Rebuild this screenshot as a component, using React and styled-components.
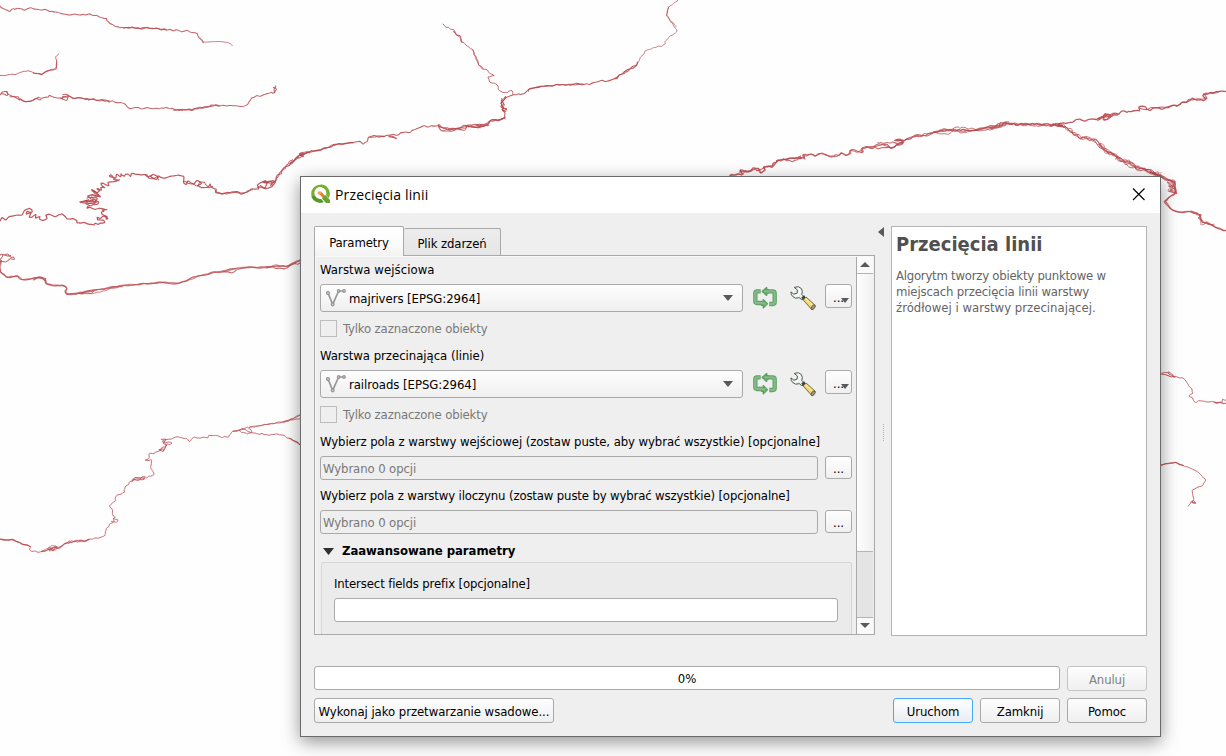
import React from "react";
import styled, { createGlobalStyle, css } from "styled-components";

const GlobalStyle = createGlobalStyle`
  * { box-sizing: border-box; }
  body { margin: 0; background: #fefefe; overflow: hidden; }
`;

const UI_FONT = '"DejaVu Sans Condensed", "DejaVu Sans", sans-serif';

const Desktop = styled.main`
  position: relative;
  width: 1226px;
  height: 756px;
  overflow: hidden;
  background: #fefefe;
  font: 13px/16px ${UI_FONT};
  letter-spacing: -0.1px;
  color: #000;
`;

const MapCanvas = styled.svg`
  display: block;
  width: 1226px;
  height: 756px;
`;

const Dialog = styled.section`
  position: absolute;
  left: 300px;
  top: 176px;
  width: 861px;
  height: 561px;
  border: 1px solid #6a6a6a;
  background: #efefef;
  box-shadow: 0 5px 17px rgba(0, 0, 0, 0.42);
  display: flex;
  flex-direction: column;
`;

const TitleBar = styled.header`
  height: 36px;
  flex: none;
  display: flex;
  align-items: center;
  padding: 0 15px 2px 9px;
  background: #fff;
`;

const WindowTitle = styled.h1`
  flex: 1;
  margin: 0 0 0 5px;
  padding-top: 1px;
  font: 400 14px/20px "Open Sans", "Noto Sans", sans-serif;
  letter-spacing: 0.15px;
`;

const Body = styled.div`
  display: flex;
  padding: 13px 13px 0;
  height: 423px;
`;

const FormColumn = styled.div`
  width: 561px;
  display: flex;
  flex-direction: column;
`;

const Tabs = styled.div`
  display: flex;
  align-items: flex-end;
  height: 29px;
`;

const Tab = styled.div`
  border: 1px solid #a9a9a9;
  border-radius: 2px 2px 0 0;
  text-align: center;
  ${(p) =>
    p.$active
      ? css`
          width: 90px;
          height: 30px;
          margin-bottom: -1px;
          line-height: 32px;
          border-bottom: 0;
          background: linear-gradient(#fff, #fbfbfb 60%, #f3f3f3);
          z-index: 1;
        `
      : css`
          width: 97px;
          height: 27px;
          margin-bottom: 0;
          border-left: 0;
          border-bottom: 0;
          line-height: 30px;
          background: linear-gradient(#ececec, #e6e6e6);
        `}
`;

const Panel = styled.div`
  display: flex;
  width: 561px;
  height: 380px;
  border: 1px solid #a9a9a9;
  padding: 1px 1px 0 1px;
  background: #efefef;
  box-shadow: inset 1px 1px 0 #f8f8f8;
  overflow: hidden;
`;

const Form = styled.div`
  width: 540px;
  padding: 5px 4px 0;
  overflow: hidden;
`;

const Label = styled.div`
  height: 16px;
  white-space: nowrap;
  letter-spacing: ${(p) => p.$ls ?? -0.1}px;
`;

const Txt = styled.span`
  white-space: nowrap;
  letter-spacing: ${(p) => p.$ls ?? -0.1}px;
`;

const Row = styled.div`
  display: flex;
  align-items: flex-start;
  margin-top: ${(p) => p.$top || 0}px;
`;

const Combo = styled.div`
  width: 423px;
  height: 28px;
  display: flex;
  align-items: center;
  padding: 0 9px 0 5px;
  border: 1px solid #a9a9a9;
  border-radius: 3px;
  background: linear-gradient(#fefefe, #efefef);
  & > span { flex: 1; padding: 1px 0 0 3px; }
`;

const Field = styled.div`
  width: 498px;
  height: 24px;
  padding: 0 2px;
  line-height: 24px;
  border: 1px solid #a9a9a9;
  border-radius: 3px;
  color: #787878;
`;

const PrefixInput = styled(Field)`
  width: 504px;
  background: #fff;
`;

const IconSlot = styled.div`
  width: 26px;
  height: 28px;
  margin-left: ${(p) => p.$gap}px;
  svg { display: block; }
`;

const MoreButton = styled.div`
  position: relative;
  width: 27px;
  height: ${(p) => (p.$menu ? 24 : 23)}px;
  margin-left: ${(p) => (p.$menu ? 9 : 7)}px;
  border: 1px solid #a9a9a9;
  border-radius: 3px;
  text-align: center;
  line-height: ${(p) => (p.$menu ? 25 : 24)}px;
  background: linear-gradient(#fefefe, #f0f0f0);
  svg { position: absolute; right: 2px; bottom: 4px; }
`;

const CheckRow = styled.div`
  display: flex;
  align-items: center;
  height: 17px;
  margin-top: 8px;
  line-height: 18px;
  color: #787878;
`;

const CheckBox = styled.span`
  width: 17px;
  height: 17px;
  margin-right: 6px;
  border: 1px solid #bdbdbd;
`;

const GroupHeading = styled.div`
  display: flex;
  align-items: center;
  gap: 8px;
  height: 16px;
  margin-top: 9px;
  padding-left: 3px;
  font-weight: 700;
`;

const GroupBox = styled.div`
  width: 531px;
  height: 100px;
  margin: 3px 0 0 1px;
  padding: 13px 12px 0;
  border: 1px solid #d6d6d6;
  border-radius: 2px;
  background: #ebebeb;
`;

const ScrollBar = styled.div`
  width: 17px;
  display: flex;
  flex-direction: column;
  border-left: 1px solid #a9a9a9;
  background: #e4e4e4;
`;

const ScrollButton = styled.div`
  height: 16px;
  display: flex;
  align-items: center;
  justify-content: center;
  padding: 0 1px 2px 0;
  background: #fafafa;
`;

const Thumb = styled.div`
  height: 279px;
  border: 1px solid #b4b4b4;
  border-width: 1px 0;
  background: linear-gradient(90deg, #fefefe, #f0f0f0);
`;

const Groove = styled.div`
  flex: 1;
  border-bottom: 1px solid #b4b4b4;
`;

const Splitter = styled.div`
  width: 16px;
  display: flex;
  flex-direction: column;
  align-items: flex-start;
  svg { display: block; }
`;

const Grip = styled.div`
  height: 17px;
  margin: 169px 0 0 8px;
  border-left: 1px dotted #b2b2b2;
`;

const HelpPane = styled.aside`
  width: 256px;
  height: 410px;
  padding: 3px 4px;
  border: 1px solid #b4b4b4;
  background: #fff;
  color: #646464;
`;

const HelpTitle = styled.h2`
  margin: 0 0 10px;
  font: 700 20px/28px ${UI_FONT};
  letter-spacing: 0;
  color: #505050;
`;

const HelpText = styled.p`
  margin: 0;
  line-height: 16px;
`;

const Footer = styled.footer`
  padding: 30px 13px 0;
  display: grid;
  gap: 7px;
`;

const FooterRow = styled.div`
  display: flex;
  gap: 7px;
`;

const ProgressBar = styled.div`
  width: 746px;
  height: 24px;
  border: 1px solid #a9a9a9;
  border-radius: 3px;
  background: #fff;
  text-align: center;
  line-height: 24px;
`;

const Button = styled.div`
  width: ${(p) => p.$w || 80}px;
  height: 25px;
  border: 1px solid ${(p) => (p.$primary ? "#45a9f5" : p.$disabled ? "#c4c4c4" : "#a9a9a9")};
  border-radius: 3px;
  text-align: center;
  line-height: 26px;
  color: ${(p) => (p.$disabled ? "#808080" : "#000")};
  background: ${(p) =>
    p.$primary ? "linear-gradient(#fefefe, #e8edf1)" : "linear-gradient(#fefefe, #efefef)"};
`;

const BatchButton = styled(Button)`
  letter-spacing: -0.05px;
`;

const Spacer = styled.div`
  flex: 1;
`;

const QgisLogo = () => (
  <svg width="20" height="20" viewBox="0 0 60 60">
    <path d="M30 2a27 27 0 1 0 11 52l-8-9a18 18 0 1 1 15-12l8 9A27 27 0 0 0 30 2z" fill="#78ae2e" />
    <path d="M4 36a27 27 0 0 0 37 18l-8-9a18 18 0 0 1-18-9z" fill="#589632" />
    <path d="M37 34h10l13 14v9H48L37 45z" fill="#69a232" />
    <path d="M23 23h11l8 9-2 3 2 3h-7z" fill="#ee7913" />
    <path d="M23 23h11l2 3-9 7-4-4z" fill="#f2a064" />
  </svg>
);

const CloseIcon = () => (
  <svg width="13" height="13" viewBox="0 0 13 13">
    <path d="M1 .5l11.5 11.5M12.5 .5L1 12" stroke="#000" strokeWidth="1.15" />
  </svg>
);

const VectorLineIcon = () => (
  <svg width="20" height="18" viewBox="0 0 60 54" fill="none" stroke="#969696">
    <path d="M6 12L20 46L38 6H54" strokeWidth="5" />
    <g fill="#c8c8c8" strokeWidth="3.4">
      <circle cx="6" cy="12" r="4.5" />
      <circle cx="20" cy="46" r="4.5" />
      <circle cx="38" cy="6" r="4" />
      <circle cx="54" cy="6" r="4" />
    </g>
  </svg>
);

const IterateIcon = () => (
  <svg width="24" height="23" viewBox="0 0 72 69" fill="none">
    <g stroke="#5d9f63" strokeWidth="13" strokeLinejoin="round">
      <path d="M23 16H12Q7 16 7 21V46Q7 51 12 51H32" />
      <path d="M49 54H60Q65 54 65 49V22Q65 16 59 16H42" />
    </g>
    <path d="M28 16L41 5V11H46V21H41V28zM43 53L31 41V47H26V58H31V65z" fill="#84b988" stroke="#5d9f63" strokeWidth="4.5" strokeLinejoin="round" />
    <g stroke="#84b988" strokeWidth="7">
      <path d="M22 16H12Q7 16 7 21V46Q7 51 12 51H34" />
      <path d="M50 54H60Q65 54 65 49V22Q65 16 59 16H40" />
    </g>
  </svg>
);

const WrenchIcon = () => (
  <svg width="27" height="27" viewBox="0 0 81 81">
    <path
      d="M13 6Q27 0 35 9Q41 18 37 28L45 36L38 45L29 38Q16 43 8 34Q2 28 3 20L12 27L22 24L23 14z"
      fill="#e9efe9"
      stroke="#4d534d"
      strokeWidth="3"
      strokeLinejoin="round"
    />
    <path d="M24 8Q32 10 31 19Q30 28 17 33" fill="none" stroke="#fff" strokeWidth="4" />
    <path d="M35 37L44 30L49 38L42 46z" fill="#3e403c" />
    <path d="M41 45L50 36L79 62L69 76z" fill="#f0d878" stroke="#6d6442" strokeWidth="3" strokeLinejoin="round" />
    <path d="M49 42L75 65" stroke="#f8e8a4" strokeWidth="4" />
    <ellipse cx="72" cy="68" rx="5" ry="8" transform="rotate(38 72 68)" fill="#a09a80" stroke="#54503f" strokeWidth="2.5" />
  </svg>
);

const Arrow = ({ dir = "down", w = 10, h = 6, fill = "#595959" }) => {
  const d = {
    down: `M0 0H${w}L${w / 2} ${h}z`,
    up: `M0 ${h}H${w}L${w / 2} 0z`,
    left: `M${w} 0V${h}L0 ${h / 2}z`,
  }[dir];
  return (
    <svg width={w} height={h} viewBox={`0 0 ${w} ${h}`}>
      <path d={d} fill={fill} />
    </svg>
  );
};

/* Seeded noise keeps every strand of a river identical between renders. */
const noise = (seed) => {
  let s = seed * 7919 + 17;
  return () => {
    s = (s * 16807) % 2147483647;
    return s / 2147483647 - 0.5;
  };
};

/* Subdivides a course, displaces each step and rounds the bends into meanders. */
const strand = (pts, amp, step, seed) => {
  const r = noise(seed);
  const n = pts.trim().split(/\s+/).map((p) => p.split(",").map(Number));
  const out = [n[0]];
  for (let i = 1; i < n.length; i++) {
    const [x0, y0] = n[i - 1];
    const [x1, y1] = n[i];
    const k = Math.max(1, Math.round(Math.hypot(x1 - x0, y1 - y0) / step));
    for (let j = 1; j <= k; j++) {
      const t = j / k;
      out.push([x0 + (x1 - x0) * t + r() * amp, y0 + (y1 - y0) * t + r() * amp]);
    }
  }
  let d = `M${out[0][0]} ${out[0][1]}`;
  for (let i = 1; i < out.length - 1; i++) {
    const [x, y] = out[i];
    const [a, b] = out[i + 1];
    d += `Q${x.toFixed(1)} ${y.toFixed(1)} ${((x + a) / 2).toFixed(1)} ${((y + b) / 2).toFixed(1)}`;
  }
  const [lx, ly] = out[out.length - 1];
  return `${d}L${lx.toFixed(1)} ${ly.toFixed(1)}`;
};

const River = ({ pts, amp = 5, step = 7, n = 1, w = 2.6, o = 0.85, seed = 1 }) =>
  Array.from({ length: n }, (_, i) => (
    <path key={i} d={strand(pts, amp * 1.35, step, seed + i * 13)} strokeWidth={w + 0.5} opacity={o} />
  ));

/* Each tile holds courses surveyed at three units per pixel. */
const TILES = [
  {
    x: 0, y: 0,
    rivers: [
      { pts: "0,18 12,24 28,34 40,27 60,27 75,29 90,22 105,26 145,30 155,36 190,40 235,46 270,42 290,48 320,55 325,65 345,80 400,84 450,83 500,89 560,93 590,102 608,126", amp: 5, w: 2.6 },
      { pts: "608,126 640,125 680,126 698,136", amp: 2, w: 2 },
      { pts: "370,83 440,85 500,89", amp: 3 },
      { pts: "0,226 45,223 65,214 90,212 105,220 125,222 140,213 168,206 170,190 168,170 178,160", amp: 3, w: 2.4 },
      { pts: "100,218 125,226 145,212 168,206 170,184", amp: 4 },
      { pts: "0,285 10,277 24,276 22,288 2,280", amp: 6 },
      { pts: "20,276 34,291 50,295 85,305 110,295 150,288 185,299 200,286 215,293 260,298 300,301 350,306 380,316 390,325 450,325 510,326 555,331 600,325 640,316 690,317 728,320 748,308 752,294 800,282 825,275 822,265 830,256", amp: 5, w: 2.6 },
      { pts: "30,290 60,296 85,303 120,294", amp: 8 },
      { pts: "188,284 205,287 198,300 182,297 190,290 240,294 280,300 330,303", amp: 6 },
      { pts: "520,330 560,331 600,324 660,315", amp: 5 },
      { pts: "820,262 829,268 822,277", amp: 3 },
      { pts: "0,663 6,652 18,660 24,650 45,647 65,645 72,632 86,626 98,630 95,638 80,633 78,644 95,636 86,652 92,654 108,642 106,656 120,650 118,657 130,661 143,656 137,646 148,643 165,650 185,642 196,648 200,657 222,656 231,661 229,669 250,668 270,672 282,675 285,668 296,675 300,669 315,668 310,661 293,660 290,651 303,655 308,648 326,655 318,659 322,650 306,643 303,637 312,634 306,630 322,629 300,625 284,628 272,621 260,625 262,619 295,612 297,605 270,610 239,607 268,598 255,604 290,603 292,594 268,592 262,588 278,584 303,590 284,580 275,568 290,578 300,574 290,566 305,570 302,561 316,562 304,556 303,549 316,552 326,558 324,548 338,545 360,541 340,540 345,535 328,528 333,524 346,536 350,522 362,531 362,521 374,530 376,522 385,522 391,530 393,521 420,524 440,524 446,531 460,523 450,531 472,538 474,526 486,534 498,535 510,529 540,525 553,530 550,548 560,555 563,543 583,553 590,541 606,550 592,556 600,562 625,563 630,550 634,561 650,568 646,578 665,580 714,574 722,583 745,575 752,567 777,566 772,554 796,542 800,548 819,541 826,547 816,560 796,566 781,557", amp: 2, step: 6, w: 3.1, o: 0.92 },
      { pts: "242,608 262,600 290,600 262,606 258,613 290,609 270,592 258,598", amp: 6 },
      { pts: "276,572 298,584 292,590 270,586", amp: 6 },
      { pts: "436,525 450,535 474,530 460,524 480,535", amp: 8 },
      { pts: "552,544 590,556 606,546 634,562", amp: 8 },
      { pts: "772,562 800,562 800,550 790,543 818,546 826,541 834,526 844,520 850,508 866,494 880,482 895,468 908,462 910,468 898,463 916,459 930,455", amp: 5, w: 3.4 },
      { pts: "646,572 665,582 714,576 730,581 760,569", amp: 4 },
      { pts: "790,545 820,550 812,556 826,544 850,508 880,480", amp: 6 },
      { pts: "0,765 18,762 28,768 46,774 44,780 30,774 26,783 3,784 3,776 10,766 34,770", amp: 5 },
      { pts: "4,782 -2,800 3,820 20,832 52,827 66,840 105,836 125,832 138,844 138,852 160,857 190,856 200,862 195,876 204,884 270,874 350,859 430,852 485,847 535,852 580,833 640,818 700,808 740,801 790,803 830,796 860,798 903,781", amp: 5, step: 12, n: 3, w: 2.8, o: 0.62 },
      { pts: "200,884 240,880 280,880 330,866 365,858", amp: 4, w: 2 },
      { pts: "235,878 260,872 285,874 272,881 240,881", amp: 3, w: 2 },
      { pts: "100,840 120,831 136,834 138,845", amp: 3 },
      { pts: "670,815 690,820 710,812", amp: 5 },
      { pts: "800,804 850,804 852,812 866,800 903,786", amp: 6 },
    ],
  },
  {
    x: 290, y: 0,
    rivers: [
      { pts: "459,72 470,80 490,91 500,104 512,115 516,127 530,134 548,148 553,165 565,190 578,208 595,213 612,226 594,233 600,245 620,255 628,272 640,277 655,276 657,271 670,274 667,285", amp: 5, w: 2.4 },
      { pts: "490,94 500,104 512,110 516,126", amp: 6 },
      { pts: "548,148 555,168 565,190 582,211", amp: 6, w: 2 },
      { pts: "1164,0 1148,12 1135,20 1130,45 1140,62 1152,75 1160,95 1140,110 1124,125 1127,135 1085,144 1065,155 1050,175 1040,195", amp: 4, w: 2.1, o: 0.8 },
      { pts: "1040,195 1020,205 995,222 970,237 950,244 925,244 895,252 850,252 800,255 760,258 725,266 712,275 700,284 680,283 665,286 650,290 637,302 632,315 640,330 645,340 645,352 630,358 600,364 590,374 570,378 520,383 490,390 465,386 445,380 405,379 380,385 355,396 340,397 320,405 290,408 240,410 232,414 231,425 220,430 200,424 180,430 150,430 120,440 85,450 50,457 35,463 20,472 0,493", amp: 5, w: 2.7, o: 0.9 },
      { pts: "1135,20 1134,35 1130,50 1146,66 1156,84", amp: 6, w: 2 },
      { pts: "1042,186 1036,200 1000,220 972,238", amp: 5, w: 3 },
      { pts: "880,252 850,255 800,254 730,262 714,272", amp: 4 },
      { pts: "646,290 635,308 634,322 650,325 645,335 636,330 642,312 634,300", amp: 7, n: 2, w: 2.5 },
      { pts: "645,354 620,362 600,362 588,374 560,376", amp: 6, n: 2 },
      { pts: "596,376 565,382 560,376 530,376 525,388 500,388 480,392 455,390 442,376 470,384 510,386 520,378 575,382", amp: 6, n: 2, w: 2.1 },
      { pts: "295,408 322,416 300,406", amp: 3 },
      { pts: "240,412 285,409", amp: 3 },
      { pts: "190,428 140,433 85,450 45,458 28,462 40,468 20,474 0,493", amp: 5, n: 2, w: 2 },
    ],
  },
  {
    x: 0, y: 390,
    rivers: [
      { pts: "0,447 40,450 60,461 90,470 88,480 125,487 140,478 165,470 180,473 200,459 240,455 265,450 305,438 314,436 318,420 330,404 340,395 345,380 335,365 330,346 345,332 345,322 355,312 374,305 372,292 395,274 410,265 440,262 462,255 461,240 453,232 457,210 437,211 450,203 447,195 480,183 490,172 500,175 498,165 515,160 487,157 485,150 515,148 525,143 545,142 560,145 572,156 575,145 600,140 615,143 640,134 660,140 685,140 700,126 720,117 735,112 755,117 755,126 740,130 722,125 720,117", amp: 6, w: 2.3 },
      { pts: "0,447 40,450 60,461 90,470", amp: 3, w: 3.2 },
      { pts: "125,484 150,470 170,471 166,479 144,480 180,473 205,458 230,449 255,455 270,448", amp: 7, n: 2, w: 2 },
      { pts: "396,274 405,264 435,262 428,268 400,270", amp: 4 },
      { pts: "484,148 500,150 490,158 500,162 492,182 478,178 494,176", amp: 6 },
      { pts: "340,385 355,390 350,398 334,394", amp: 3, w: 2 },
      { pts: "748,112 780,108 820,99 850,96 880,86 903,74", amp: 5, n: 2, w: 2 },
      { pts: "852,94 880,90 903,85", amp: 3, w: 2.2 },
      { pts: "700,124 730,120 760,126 800,135 840,134 870,146 903,166", amp: 5, w: 2.4 },
      { pts: "868,145 903,166", amp: 4 },
    ],
  },
  {
    x: 730, y: 80,
    rivers: [
      { pts: "0,286 40,284 28,272 60,275 70,266 85,267 90,278 105,272 100,260 125,260 130,248 150,240 180,235 225,236 220,225 255,226 275,218 300,228 325,226 335,218 350,228 362,220 358,210 380,214 400,215 395,203 420,200 440,195 475,196 485,207 500,195 520,188 512,178 495,180 525,182 550,170 585,168 610,156 640,150 680,150 720,150 760,146 800,135 820,130 860,133 920,132 970,136 1000,140", amp: 6, w: 2.8, n: 2, o: 0.8 },
      { pts: "28,276 90,268 125,258 150,240 215,232", amp: 8 },
      { pts: "160,236 185,244 215,236 205,228", amp: 5 },
      { pts: "395,207 440,203 485,205 520,187 440,190", amp: 6 },
      { pts: "525,180 570,164 610,156 650,162 680,142 760,152 800,146 810,127 830,128", amp: 6, w: 2.3 },
      { pts: "610,156 660,148 700,156 770,144 810,138 840,126", amp: 10, n: 2, w: 2, step: 11 },
      { pts: "780,145 830,132 900,133 960,140 975,128 1000,137 960,134", amp: 8, n: 2, w: 2.2 },
      { pts: "985,132 1020,127 1050,117 1060,124 1085,118 1110,120 1120,108 1140,110 1165,102 1170,93 1190,95 1230,93 1228,80 1245,82 1255,92 1275,83 1300,86 1320,78 1348,76 1360,67 1380,62 1385,53 1400,59 1430,60 1418,43 1450,38 1470,33 1490,35", amp: 4, w: 3.4, o: 0.9 },
      { pts: "1102,116 1130,104 1140,110 1120,120 1125,103 1165,102", amp: 7, n: 2 },
      { pts: "1228,84 1244,90 1262,84 1300,83 1348,75", amp: 5 },
      { pts: "1350,73 1380,60 1430,57 1420,42 1460,38 1470,32", amp: 5 },
      { pts: "985,132 1020,150 1050,172 1100,182 1120,205 1150,225 1190,250 1240,268 1292,288", amp: 12, n: 4, w: 2.2, step: 10 },
      { pts: "1110,190 1130,215 1155,228 1205,252 1235,272 1290,286", amp: 18, n: 3, w: 1.5, step: 12 },
    ],
  },
  {
    x: 1150, y: 150,
    rivers: [
      { pts: "0,66 31,78 52,88 75,98 76,130 55,147 43,155 60,175 82,187 125,185 148,193 155,218 180,222 205,234 228,243", amp: 4, n: 2, w: 3.2, o: 0.75, step: 9 },
      { pts: "31,80 58,92 76,93 70,105 54,108 78,116 58,122 80,130 56,126 68,108 50,94 72,99 76,124", amp: 7, n: 2, w: 1.8 },
      { pts: "125,187 152,196 145,205 158,212 154,222 175,218 190,226", amp: 6, n: 2, w: 2 },
      { pts: "31,671 58,668 72,680 95,684 108,692 112,705 126,715 127,730 114,738 125,745 132,757 155,753 190,754 200,759 218,758 217,748 228,752", amp: 5, w: 2.4 },
      { pts: "35,673 56,678 76,681 52,668", amp: 4 },
      { pts: "192,756 228,761", amp: 3 },
      { pts: "31,946 50,942 75,937 100,947 130,959 153,972 167,990 158,1007 125,1020 126,1030 132,1046 126,1060 137,1058 128,1050 116,1067", amp: 3, w: 2.4 },
      { pts: "34,946 55,940 75,938 100,947", amp: 2 },
      { pts: "126,1056 136,1060", amp: 2 },
    ],
  },
];

const RiversLayer = () => (
  <MapCanvas viewBox="0 0 1226 756" fill="none" stroke="#b9484e" strokeLinejoin="round" strokeLinecap="round">
    {TILES.map((t, i) => (
      <g key={i} transform={`translate(${t.x} ${t.y}) scale(${1 / 3})`}>
        {t.rivers.map((r, j) => (
          <River key={j} seed={i * 40 + j + 1} {...r} />
        ))}
      </g>
    ))}
  </MapCanvas>
);

const LayerPicker = ({ layer }) => (
  <>
    <Row $top={6}>
      <Combo>
        <VectorLineIcon />
        <Txt $ls={-0.05}>{layer}</Txt>
        <Arrow />
      </Combo>
      <IconSlot $gap={10}>
        <Row $top={2}><IterateIcon /></Row>
      </IconSlot>
      <IconSlot $gap={11}>
        <Row $top={1}><WrenchIcon /></Row>
      </IconSlot>
      <MoreButton $menu>
        <Txt>...</Txt>
        <Arrow w={8} h={5} />
      </MoreButton>
    </Row>
    <CheckRow>
      <CheckBox />
      <Txt $ls={-0.14}>Tylko zaznaczone obiekty</Txt>
    </CheckRow>
  </>
);

const FieldPicker = () => (
  <Row $top={6}>
    <Field>Wybrano 0 opcji</Field>
    <MoreButton>...</MoreButton>
  </Row>
);

const FieldLabel = styled(Label)`
  margin-top: ${(p) => p.$top}px;
`;

export default function App() {
  return (
    <Desktop>
      <GlobalStyle />
      <RiversLayer />
      <Dialog>
        <TitleBar>
          <QgisLogo />
          <WindowTitle>Przecięcia linii</WindowTitle>
          <CloseIcon />
        </TitleBar>
        <Body>
          <FormColumn>
            <Tabs>
              <Tab $active>Parametry</Tab>
              <Tab>Plik zdarzeń</Tab>
            </Tabs>
            <Panel>
              <Form>
                <Label $ls={0.06}>Warstwa wejściowa</Label>
                <LayerPicker layer="majrivers [EPSG:2964]" />
                <FieldLabel $top={11} $ls={-0.02}>Warstwa przecinająca (linie)</FieldLabel>
                <LayerPicker layer="railroads [EPSG:2964]" />
                <FieldLabel $top={11} $ls={-0.08}>
                  Wybierz pola z warstwy wejściowej (zostaw puste, aby wybrać wszystkie) [opcjonalne]
                </FieldLabel>
                <FieldPicker />
                <FieldLabel $top={8} $ls={-0.14}>
                  Wybierz pola z warstwy iloczynu (zostaw puste by wybrać wszystkie) [opcjonalne]
                </FieldLabel>
                <FieldPicker />
                <GroupHeading>
                  <Arrow w={11} h={7} fill="#303030" />
                  <Txt $ls={-0.05}>Zaawansowane parametry</Txt>
                </GroupHeading>
                <GroupBox>
                  <Label $ls={-0.13}>Intersect fields prefix [opcjonalne]</Label>
                  <Row $top={6}>
                    <PrefixInput />
                  </Row>
                </GroupBox>
              </Form>
              <ScrollBar>
                <ScrollButton><Arrow dir="up" w={10} h={5} /></ScrollButton>
                <Thumb />
                <Groove />
                <ScrollButton><Arrow w={10} h={5} /></ScrollButton>
              </ScrollBar>
            </Panel>
          </FormColumn>
          <Splitter>
            <Row $top={1}>
              <IconSlot $gap={3}><Arrow dir="left" w={6} h={10} /></IconSlot>
            </Row>
            <Grip />
          </Splitter>
          <HelpPane>
            <HelpTitle>Przecięcia linii</HelpTitle>
            <HelpText>
              <Txt $ls={-0.24}>Algorytm tworzy obiekty punktowe w</Txt>
              <br />
              <Txt $ls={-0.15}>miejscach przecięcia linii warstwy</Txt>
              <br />
              <Txt $ls={0}>źródłowej i warstwy przecinającej.</Txt>
            </HelpText>
          </HelpPane>
        </Body>
        <Footer>
          <FooterRow>
            <ProgressBar>0%</ProgressBar>
            <Button $disabled>Anuluj</Button>
          </FooterRow>
          <FooterRow>
            <BatchButton $w={240}>Wykonaj jako przetwarzanie wsadowe...</BatchButton>
            <Spacer />
            <Button $primary>Uruchom</Button>
            <Button>Zamknij</Button>
            <Button>Pomoc</Button>
          </FooterRow>
        </Footer>
      </Dialog>
    </Desktop>
  );
}
